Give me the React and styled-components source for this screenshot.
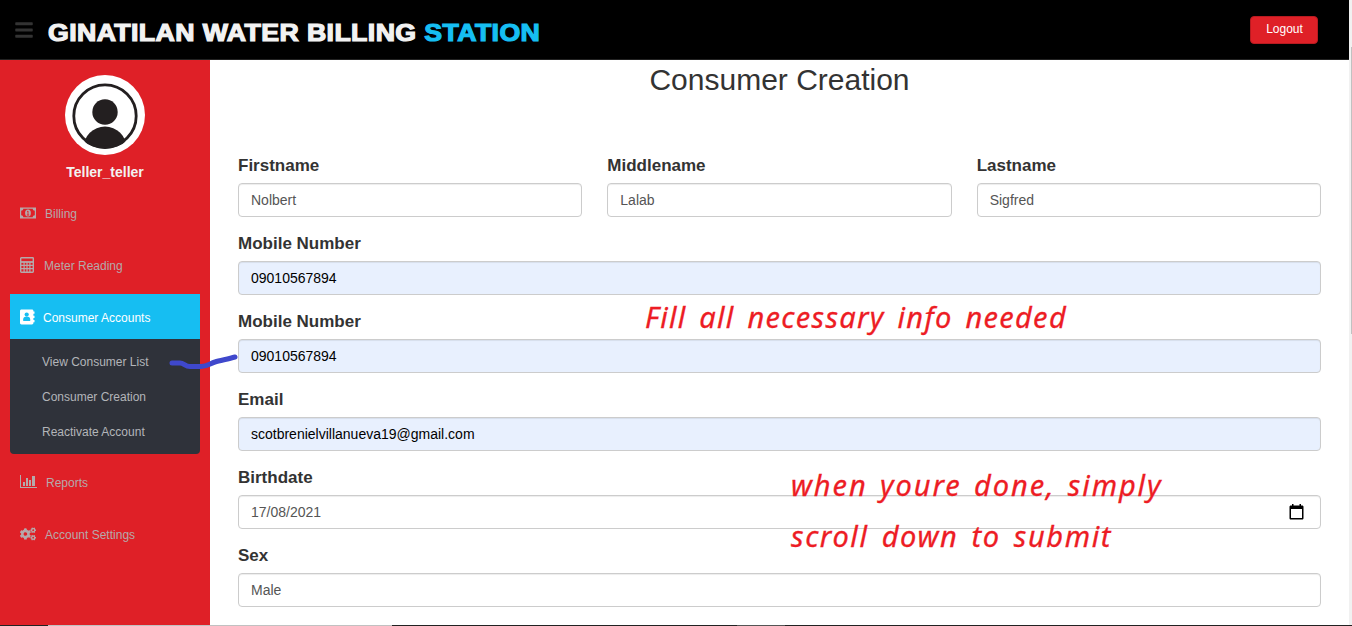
import React from "react";
import styled, { createGlobalStyle, css } from "styled-components";
import { FaBars, FaCogs } from "react-icons/fa";

const GlobalStyle = createGlobalStyle`
  * { box-sizing: border-box; }
  body {
    margin: 0;
    overflow: hidden;
    background: #fff;
    color: #333;
    font-family: "Liberation Sans", Arial, sans-serif;
  }
`;

const Window = styled.div`
  position: relative;
  display: flex;
  flex-direction: column;
  width: 1352px;
  height: 626px;
  overflow: hidden;
`;

const Viewport = styled.div`
  display: flex;
  height: 625px;
`;

const Page = styled.div`
  display: flex;
  flex-direction: column;
  width: 1349px;
`;

const Header = styled.header`
  display: flex;
  align-items: center;
  height: 60px;
  padding: 0 31px 0 15px;
  background: #000;
  border-bottom: 1px solid #222;
`;

const MenuIcon = styled(FaBars)`
  width: 18px;
  height: 20px;
  margin: 0 15px 0 0;
  color: #333;
`;

const Brand = styled.h1`
  flex: 1;
  margin: 6px 0 0;
  font-size: 24px;
  line-height: 30px;
  font-weight: 700;
  letter-spacing: 0.36px;
  white-space: nowrap;
  color: #f2f2f2;
  transform: scaleX(1.112);
  transform-origin: left;
  -webkit-text-stroke: 1.2px;
`;

const BrandAccent = styled.span`
  color: #16bef2;
`;

const LogoutButton = styled.button`
  width: 68px;
  height: 28px;
  padding: 0 0 2px 1px;
  border: 1px solid #b81a20;
  border-radius: 4px;
  background: #df2027;
  color: #fff;
  font: 12px/18px "Liberation Sans", Arial, sans-serif;
`;

const Body = styled.div`
  display: flex;
  flex: 1;
`;

const Sidebar = styled.aside`
  display: flex;
  flex-direction: column;
  width: 210px;
  padding: 15px 10px 0;
  background: #df2027;
`;

const Profile = styled.div`
  display: flex;
  flex-direction: column;
  align-items: center;
  height: 115px;
  font-size: 14px;
  font-weight: 700;
  line-height: 20px;
  color: #f2f2f2;
  svg { margin-bottom: 7px; }
`;

const Nav = styled.nav`
  display: flex;
  flex-direction: column;
`;

const NavItem = styled.a`
  display: flex;
  align-items: center;
  height: 45px;
  margin-bottom: ${(p) => (p.$active ? 0 : 7)}px;
  padding: 3px 10px 0;
  font-size: 12px;
  color: ${(p) => (p.$active ? "#fff" : "#b5a9ab")};
  background: ${(p) => (p.$active ? "#16bef2" : "transparent")};
  svg {
    flex: none;
    margin: -3px ${(p) => p.$gap}px 0 0;
  }
`;

const SubMenu = styled.div`
  display: flex;
  flex-direction: column;
  height: 115px;
  margin-bottom: 5px;
  padding: 6px 0 4px 32px;
  border-radius: 0 0 4px 4px;
  background: #2f323a;
`;

const SubItem = styled.a`
  font-size: 12px;
  line-height: 35px;
  color: #b3b5b9;
`;

const Main = styled.main`
  display: flex;
  flex-direction: column;
  flex: 1;
  padding: 2px 28px 0;
`;

const Title = styled.h2`
  margin: 0 0 57px;
  font-size: 30px;
  font-weight: 400;
  line-height: 35px;
  text-align: center;
`;

const Row = styled.div`
  display: grid;
  grid-template-columns: repeat(${(p) => p.$columns}, 1fr);
  column-gap: 25px;
  margin-bottom: 15px;
`;

const Label = styled.div`
  margin-bottom: 6px;
  font-size: 17px;
  font-weight: 700;
  line-height: 23px;
`;

const Control = styled.div`
  display: flex;
  align-items: center;
  justify-content: space-between;
  height: 34px;
  padding: 0 16px 0 12px;
  border: 1px solid #ccc;
  border-radius: 4px;
  background: #fff;
  box-shadow: inset 0 1px 1px rgba(0, 0, 0, 0.075);
  font-size: 14px;
  color: #555;
  ${(p) => p.$autofill && css`
    background: #e8f0fe;
    color: #000;
  `}
`;

const ScrollTrack = styled.div`
  width: 3px;
  padding: 47px 0 0 2px;
  background: #f1f1f1;
`;

const ScrollThumb = styled.div`
  height: 287px;
  background: #c1c1c1;
`;

const BottomEdge = styled.div`
  display: flex;
  height: 1px;
  background: #222;
`;

const EdgePart = styled.div`
  width: ${(p) => p.$width}px;
  background: ${(p) => p.$color};
`;

const Note = styled.div`
  position: absolute;
  left: ${(p) => p.$x}px;
  top: ${(p) => p.$y}px;
  font-family: "Noto Sans", "Open Sans", sans-serif;
  font-style: italic;
  font-size: 29px;
  line-height: 40px;
  white-space: nowrap;
  color: #ed1c24;
  letter-spacing: ${(p) => p.$spacing}px;
  word-spacing: ${(p) => p.$words}px;
  -webkit-text-stroke: 0.3px;
`;

const InkStroke = styled.svg`
  position: absolute;
  left: 165px;
  top: 350px;
`;

const Avatar = () => (
  <svg width="80" height="80" viewBox="0 0 80 80">
    <defs>
      <clipPath id="face"><circle cx="40" cy="42" r="32" /></clipPath>
    </defs>
    <circle cx="40" cy="40" r="40" fill="#fff" />
    <g fill="#231f20">
      <circle cx="40" cy="37" r="12.7" />
      <ellipse cx="40" cy="73" rx="21.5" ry="21.5" clipPath="url(#face)" />
    </g>
    <circle cx="40" cy="41" r="31.2" fill="none" stroke="#231f20" strokeWidth="2.8" />
  </svg>
);

const MoneyIcon = () => (
  <svg width="16" height="12" viewBox="0 0 16 12">
    <path
      fill="currentColor"
      fillRule="evenodd"
      d="M0 .5h16v11H0zM3.300 1.700C3.300 2.900 2.400 3.700 1.200 3.700v4.600c1.200 0 2.100.8 2.100 2h9.400c0-1.200.9-2 2.100-2V3.700c-1.200 0-2.100-.8-2.100-2z"
    />
    <ellipse cx="8" cy="6" rx="2.900" ry="3.500" fill="currentColor" />
    <path d="M7 4.700l1-.7v4M6.800 8.100h2.400" fill="none" stroke="#df2027" strokeWidth=".9" />
  </svg>
);

const CalculatorIcon = () => (
  <svg width="14" height="16" viewBox="0 0 14 16" fill="none" stroke="currentColor">
    <rect x=".7" y=".7" width="12.6" height="14.5" rx=".6" strokeWidth="1.4" />
    <path d="M1 5h12" strokeWidth="1.800" />
    <path d="M1 8.300h12M1 11.600h12M4.100 5v10M7 5v10M9.900 5v10" strokeWidth="1.200" />
  </svg>
);

const AddressBookIcon = () => (
  <svg width="15" height="16" viewBox="0 0 15 16">
    <path d="M1.500.5H12c.8 0 1.400.6 1.400 1.400V2.500h1.100v2.300h-1.100v1.900h1.100V9h-1.100v2h1.100v2.300h-1.100v.8c0 .8-.6 1.400-1.400 1.400H1.500C.7 15.500 0 14.900 0 14.100V1.900C0 1.100.7.5 1.500.5z" fill="#fff" />
    <circle cx="6.700" cy="5.600" r="2.100" fill="#16bef2" />
    <path d="M3.200 12V10.200c0-1.500 1-2.400 2.200-2.400h2.600c1.200 0 2.200.9 2.200 2.400V12z" fill="#16bef2" />
  </svg>
);

const ChartIcon = () => (
  <svg width="17" height="14" viewBox="0 0 17 14" fill="currentColor">
    <path d="M0 0h1v12h16v1H0zM3 7h2v4H3zM6 3h2v8H6zM9 5h2v6H9zM12 1h3v10h-3z" />
  </svg>
);

const CalendarIcon = () => (
  <svg width="15" height="16" viewBox="0 0 15 16" fill="#000">
    <path d="M3 0h1.500v1.500h6V0H12v1.500h1.200c.7 0 1.300.6 1.300 1.300v11.400c0 .7-.6 1.300-1.300 1.300H1.800c-.7 0-1.300-.6-1.300-1.300V2.800c0-.7.6-1.300 1.300-1.300H3zM2 5v9h11V5z" fillRule="evenodd" />
  </svg>
);

const Field = ({ label, value, autofill, icon }) => (
  <div>
    <Label>{label}</Label>
    <Control $autofill={autofill}>
      <span>{value}</span>
      {icon}
    </Control>
  </div>
);

const rows = [
  [
    { label: "Firstname", value: "Nolbert" },
    { label: "Middlename", value: "Lalab" },
    { label: "Lastname", value: "Sigfred" },
  ],
  [{ label: "Mobile Number", value: "09010567894", autofill: true }],
  [{ label: "Mobile Number", value: "09010567894", autofill: true }],
  [{ label: "Email", value: "scotbrenielvillanueva19@gmail.com", autofill: true }],
  [{ label: "Birthdate", value: "17/08/2021", icon: <CalendarIcon /> }],
  [{ label: "Sex", value: "Male" }],
];

export default function App() {
  return (
    <Window>
      <GlobalStyle />
      <Viewport>
        <Page>
          <Header>
            <MenuIcon />
            <Brand>GINATILAN WATER BILLING <BrandAccent>STATION</BrandAccent></Brand>
            <LogoutButton>Logout</LogoutButton>
          </Header>
          <Body>
            <Sidebar>
              <Profile><Avatar />Teller_teller</Profile>
              <Nav>
                <NavItem $gap={9}><MoneyIcon />Billing</NavItem>
                <NavItem $gap={10}><CalculatorIcon />Meter Reading</NavItem>
                <NavItem $active $gap={8}><AddressBookIcon />Consumer Accounts</NavItem>
                <SubMenu>
                  <SubItem>View Consumer List</SubItem>
                  <SubItem>Consumer Creation</SubItem>
                  <SubItem>Reactivate Account</SubItem>
                </SubMenu>
                <NavItem $gap={9}><ChartIcon />Reports</NavItem>
                <NavItem $gap={9}><FaCogs size={16} />Account Settings</NavItem>
              </Nav>
            </Sidebar>
            <Main>
              <Title>Consumer Creation</Title>
              {rows.map((fields, i) => (
                <Row key={i} $columns={fields.length}>
                  {fields.map((field) => <Field key={field.label} {...field} />)}
                </Row>
              ))}
            </Main>
          </Body>
        </Page>
        <ScrollTrack><ScrollThumb /></ScrollTrack>
      </Viewport>
      <BottomEdge>
        <EdgePart $width={48} $color="#222" />
        <EdgePart $width={344} $color="#c1c1c1" />
        <EdgePart $width={345} $color="#222" />
        <EdgePart $width={48} $color="#555" />
      </BottomEdge>
      <Note $x={645} $y={297} $spacing={1.3} $words={4}>Fill all necessary info needed</Note>
      <Note $x={791} $y={465} $spacing={1.9} $words={3}>when youre done, simply</Note>
      <Note $x={791} $y={516} $spacing={1.6} $words={4}>scroll down to submit</Note>
      <InkStroke width="75" height="22" fill="none">
        <path d="M7 13h8c4 0 5 3.500 10 3.500h11c6 0 9-3 14-4.500S63 9 70 7" stroke="#3f48cc" strokeWidth="5" strokeLinecap="round" strokeLinejoin="round" />
      </InkStroke>
    </Window>
  );
}
